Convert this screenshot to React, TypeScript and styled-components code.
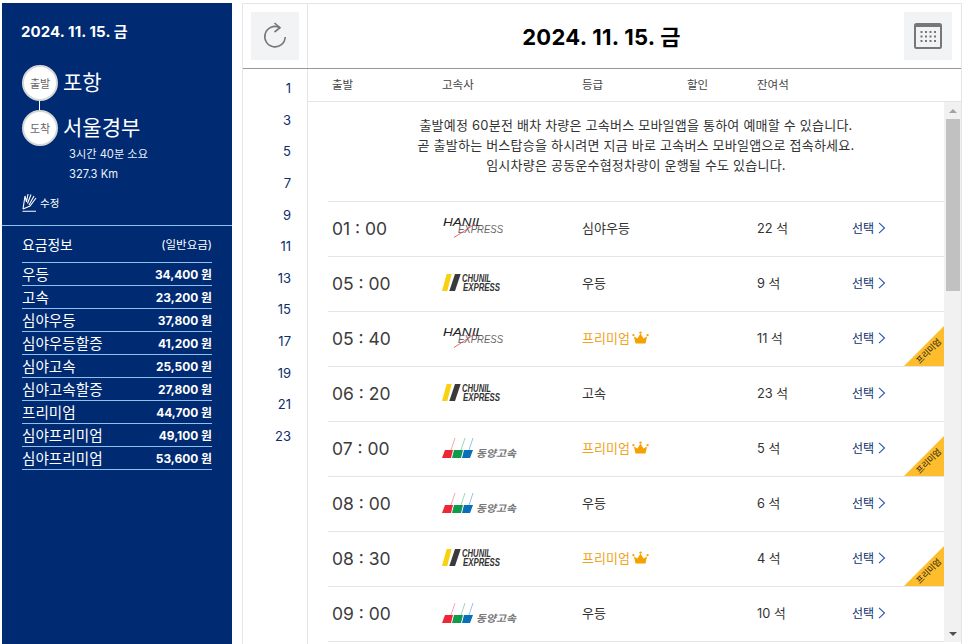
import React from "react";
import styled, { createGlobalStyle } from "styled-components";

const FONT = `Inter, "Noto Sans CJK KR", "Noto Sans", sans-serif`;

const GlobalCSS = createGlobalStyle`
    html, body {
        margin: 0;
        padding: 0;
        background: #fff;
        font-family: ${FONT};
    }
    * { box-sizing: border-box; }
`;

const PageCSS = styled.div`
    width: 965px;
    height: 644px;
    overflow: hidden;
    display: flex;
    align-items: flex-start;
    gap: 10px;
    padding: 3px 0 0 2px;
`;

const SideCSS = styled.aside`
    width: 230px;
    height: 641px;
    flex: none;
    background: #002a72;
    color: #fff;
`;

const SideDateCSS = styled.div`
    padding: 19px 0 0 19px;
    height: 62px;
    font-size: 15px;
    letter-spacing: 0.1px;
    line-height: 20px;
    font-weight: 700;
`;

const RouteCSS = styled.div`
    padding-left: 20px;
    height: 161px;
    border-bottom: 1px solid #8fc1ee;
`;

const StopCSS = styled.div`
    display: flex;
    align-items: center;
    gap: 5px;
    height: 36px;
`;

const StopBadgeCSS = styled.div`
    width: 36px;
    height: 36px;
    flex: none;
    border-radius: 50%;
    background: #fff;
    border: 2px solid #d8d8d8;
    color: #666;
    font-size: 11px;
    display: flex;
    align-items: center;
    justify-content: center;
`;

const StopNameCSS = styled.div`
    font-size: 21px;
    line-height: 36px;
`;

const StopLinkCSS = styled.div`
    width: 1px;
    height: 9px;
    background: #fff;
    margin-left: 17px;
`;

const RouteInfoCSS = styled.div`
    padding-left: 47px;
    font-size: 11.2px;
    line-height: 20px;
    margin-top: -2px;
    color: #eaf2fb;
`;

const EditCSS = styled.div`
    display: flex;
    align-items: center;
    gap: 3px;
    margin-top: 7px;
    font-size: 10.5px;
    height: 22px;
`;

const FareCSS = styled.div`
    padding: 0 20px;
`;

const FareHeadCSS = styled.div`
    display: flex;
    justify-content: space-between;
    align-items: center;
    height: 37px;
    border-bottom: 1px solid #8fc1ee;
    font-size: 13.8px;
    & > small {
        font-size: 11.5px;
    }
`;

const FareRowCSS = styled.div`
    display: flex;
    justify-content: space-between;
    align-items: center;
    height: 23px;
    padding-bottom: 2px;
    border-bottom: 1px solid #8fc1ee;
    font-size: 14.6px;
    & > b {
        font-size: 11.9px;
        font-weight: 700;
    }
`;

const MainCSS = styled.main`
    width: 720px;
    height: 641px;
    flex: none;
    border: 1px solid #e5e5e5;
    border-bottom: none;
`;

const TopCSS = styled.header`
    display: flex;
    height: 65px;
    border-bottom: 1px solid #999;
`;

const TopLeftCSS = styled.div`
    width: 65px;
    flex: none;
    border-right: 1px solid #e5e5e5;
    padding: 8px;
`;

const SquareBtnCSS = styled.div`
    width: 48px;
    height: 48px;
    background: #f2f3f5;
    display: flex;
    align-items: center;
    justify-content: center;
`;

const TopTitleCSS = styled.div`
    flex: 1;
    display: flex;
    align-items: center;
    justify-content: center;
    padding-bottom: 2px;
    font-size: 22px;
    letter-spacing: 0.3px;
    font-weight: 700;
    color: #000;
`;

const TopRightCSS = styled.div`
    padding: 8px 9px 0 9px;
`;

const BodyCSS = styled.div`
    display: flex;
    height: 575px;
`;

const HoursCSS = styled.div`
    width: 65px;
    flex: none;
    border-right: 1px solid #e5e5e5;
    padding: 4px 16px 0 0;
    text-align: right;
    font-size: 13px;
    line-height: 31.64px;
    color: #0b2f6b;
`;

const ListCSS = styled.div`
    flex: 1;
    min-width: 0;
`;

const ColsCSS = styled.div`
    display: grid;
    grid-template-columns: 110px 140px 105px 70px 1fr;
    height: 33px;
    padding: 0 0 2px 24px;
    align-items: center;
    border-bottom: 1px solid #e5e5e5;
    font-size: 11.5px;
    color: #444;
`;

const ScrollAreaCSS = styled.div`
    display: flex;
    height: 540px;
`;

const RowsCSS = styled.div`
    flex: 1;
    min-width: 0;
    padding-left: 20px;
`;

const NoticeCSS = styled.div`
    height: 100px;
    padding-top: 13px;
    text-align: center;
    font-size: 13px;
    letter-spacing: 0.22px;
    line-height: 20px;
    color: #333;
    border-bottom: 1px solid #e5e5e5;
`;

const RowCSS = styled.div`
    position: relative;
    display: grid;
    grid-template-columns: 110px 140px 175px 95px 1fr;
    align-items: center;
    height: 55px;
    padding: 0 0 3px 4px;
    border-bottom: 1px solid #e5e5e5;
    font-size: 13px;
    color: #333;
`;

const TimeCSS = styled.div`
    padding-top: 2px;
    font-size: 17.5px;
    color: #3c3c3c;
`;

const GradeCSS = styled.div<{ $premium?: boolean }>`
    display: flex;
    align-items: center;
    gap: 2px;
    color: ${(props) => (props.$premium ? "#eea321" : "#333")};
`;

const SeatsCSS = styled.span`
    font-size: 12.8px;
`;

const SelectCSS = styled.div`
    display: flex;
    align-items: center;
    gap: 4px;
    font-size: 12px;
    color: #0b2f6b;
`;

const RibbonCSS = styled.div`
    position: absolute;
    right: 0;
    bottom: 0;
    width: 40px;
    height: 40px;
    background: #fdbd2c;
    clip-path: polygon(100% 0, 100% 100%, 0 100%);
    overflow: hidden;
`;

const RibbonTextCSS = styled.span`
    position: absolute;
    left: 7px;
    top: 20px;
    width: 36px;
    text-align: center;
    font-size: 8.5px;
    line-height: 11px;
    color: #111;
    white-space: nowrap;
    transform: rotate(-45deg);
`;

const ScrollbarCSS = styled.div`
    width: 17px;
    flex: none;
    background: #f1f1f1;
    display: flex;
    flex-direction: column;
    align-items: center;
    justify-content: space-between;
    height: 540px;
`;

const ScrollThumbCSS = styled.div`
    width: 14px;
    height: 172px;
    background: #c1c1c1;
    margin-bottom: auto;
`;

const ScrollArrowCSS = styled.div<{ $down?: boolean }>`
    height: 17px;
    flex: none;
    display: flex;
    align-items: center;
    justify-content: center;
    &::before {
        content: "";
        border-left: 4px solid transparent;
        border-right: 4px solid transparent;
        ${(props) =>
            props.$down
                ? "border-top: 4px solid #505050;"
                : "border-bottom: 4px solid #a3a3a3;"}
    }
`;

// logos
const LogoTextCSS = styled.text<{ $size: number; $bold?: boolean; $color: string }>`
    font-family: "Liberation Sans", "Noto Sans CJK KR", sans-serif;
    font-style: italic;
    font-size: ${(props) => props.$size}px;
    font-weight: ${(props) => (props.$bold ? 700 : 400)};
    fill: ${(props) => props.$color};
`;

// viewBox carries 8px of spare room above and below so the text boxes stay inside
const HanilLogo = () => (
    <svg width="100" height="36" viewBox="0 -8 100 36">
        <LogoTextCSS x="1" y="8" textLength="40" lengthAdjust="spacingAndGlyphs" $size={11} $color="#222">
            HANIL
        </LogoTextCSS>
        <LogoTextCSS x="16" y="15" textLength="45" lengthAdjust="spacingAndGlyphs" $size={10} $color="#666">
            EXPRESS
        </LogoTextCSS>
        <path d="M12 19.5 L33 6" stroke="#e8434f" strokeWidth="0.8" fill="none" />
    </svg>
);

const ChunilLogo = () => (
    <svg width="100" height="33" viewBox="0 -8 100 33">
        <polygon points="4.7,0 9.7,0 5.3,17 0,17" fill="#f7d112" />
        <polygon points="13,0 18.7,0 13,17 7.3,17" fill="#3a3a3a" />
        <LogoTextCSS x="20" y="8" textLength="29" lengthAdjust="spacingAndGlyphs" $size={10.5} $bold $color="#333">
            CHUNIL
        </LogoTextCSS>
        <LogoTextCSS x="21" y="16.5" textLength="37" lengthAdjust="spacingAndGlyphs" $size={10.5} $bold $color="#333">
            EXPRESS
        </LogoTextCSS>
    </svg>
);

const DongLogo = () => (
    <svg width="100" height="36" viewBox="0 -8 100 36">
        <path d="M9 12 L13 0" stroke="#f5a9b5" strokeWidth="1" />
        <path d="M19 12 L23 0" stroke="#a0d9b8" strokeWidth="1" />
        <path d="M27 12 L31 0" stroke="#93c3ec" strokeWidth="1" />
        <polygon points="3,12 11,12 9,20 0,20" fill="#ee2737" />
        <polygon points="12,12 21,12 19,20 10,20" fill="#0f9b4b" />
        <polygon points="22,12 31,12 28,20 20,20" fill="#0a6fbb" />
        <LogoTextCSS x="34" y="19" textLength="40" lengthAdjust="spacingAndGlyphs" $size={10} $bold $color="#777">
            동양고속
        </LogoTextCSS>
    </svg>
);

const CrownIcon = () => (
    <svg width="17" height="14" viewBox="0 0 17 14">
        <path
            d="M3.5 12.5 L2 5.5 L5.5 7.5 L8.5 2.5 L11.5 7.5 L15 5.5 L13.5 12.5 Z"
            fill="#f5a100"
        />
        <circle cx="8.5" cy="1.6" r="1.2" fill="#f5a100" />
        <circle cx="1.4" cy="4.2" r="1.1" fill="#f5a100" />
        <circle cx="15.6" cy="4.2" r="1.1" fill="#f5a100" />
    </svg>
);

const ChevronIcon = () => (
    <svg width="8" height="12" viewBox="0 0 8 12">
        <path d="M1 0.8 L6.5 6 L1 11.2" stroke="#2a56b0" strokeWidth="1.1" fill="none" />
    </svg>
);

const logos: Record<string, React.ReactNode> = {
    hanil: <HanilLogo />,
    chunil: <ChunilLogo />,
    dong: <DongLogo />,
};

const fares = [
    ["우등", "34,400 원"],
    ["고속", "23,200 원"],
    ["심야우등", "37,800 원"],
    ["심야우등할증", "41,200 원"],
    ["심야고속", "25,500 원"],
    ["심야고속할증", "27,800 원"],
    ["프리미엄", "44,700 원"],
    ["심야프리미엄", "49,100 원"],
    ["심야프리미엄", "53,600 원"],
];

const hours = [1, 3, 5, 7, 9, 11, 13, 15, 17, 19, 21, 23];

const buses = [
    { time: "01 : 00", logo: "hanil", grade: "심야우등", seats: "22 석" },
    { time: "05 : 00", logo: "chunil", grade: "우등", seats: "9 석" },
    { time: "05 : 40", logo: "hanil", grade: "프리미엄", seats: "11 석", premium: true },
    { time: "06 : 20", logo: "chunil", grade: "고속", seats: "23 석" },
    { time: "07 : 00", logo: "dong", grade: "프리미엄", seats: "5 석", premium: true },
    { time: "08 : 00", logo: "dong", grade: "우등", seats: "6 석" },
    { time: "08 : 30", logo: "chunil", grade: "프리미엄", seats: "4 석", premium: true },
    { time: "09 : 00", logo: "dong", grade: "우등", seats: "10 석" },
];

function App() {
    return (
        <PageCSS>
            <GlobalCSS />
            <SideCSS>
                <SideDateCSS>2024. 11. 15. 금</SideDateCSS>
                <RouteCSS>
                    <StopCSS>
                        <StopBadgeCSS>출발</StopBadgeCSS>
                        <StopNameCSS>포항</StopNameCSS>
                    </StopCSS>
                    <StopLinkCSS />
                    <StopCSS>
                        <StopBadgeCSS>도착</StopBadgeCSS>
                        <StopNameCSS>서울경부</StopNameCSS>
                    </StopCSS>
                    <RouteInfoCSS>
                        <div>3시간 40분 소요</div>
                        <div>327.3 Km</div>
                    </RouteInfoCSS>
                    <EditCSS>
                        <svg width="15" height="19" viewBox="0 0 15 19">
                            <path
                                d="M1 16 L3 3 L4.5 9 M6 1 L4.5 9 M9 1.5 L5.5 10.5 M12 3 L7 12 M14 5 L8 13 L1 16 M0.5 18.3 H14"
                                stroke="#fff"
                                strokeWidth="1.1"
                                fill="none"
                            />
                        </svg>
                        수정
                    </EditCSS>
                </RouteCSS>
                <FareCSS>
                    <FareHeadCSS>
                        <span>요금정보</span>
                        <small>(일반요금)</small>
                    </FareHeadCSS>
                    {fares.map(([name, price], i) => (
                        <FareRowCSS key={i}>
                            <span>{name}</span>
                            <b>{price}</b>
                        </FareRowCSS>
                    ))}
                </FareCSS>
            </SideCSS>
            <MainCSS>
                <TopCSS>
                    <TopLeftCSS>
                        <SquareBtnCSS>
                            <svg width="26" height="28" viewBox="0 0 26 28">
                                <path
                                    d="M17.5 5.5 A10.2 10.2 0 1 0 23.2 15"
                                    stroke="#777"
                                    strokeWidth="1.6"
                                    fill="none"
                                />
                                <path d="M12.5 1 L18 5.7 L12.5 10" stroke="#777" strokeWidth="1.6" fill="none" />
                            </svg>
                        </SquareBtnCSS>
                    </TopLeftCSS>
                    <TopTitleCSS>2024. 11. 15. 금</TopTitleCSS>
                    <TopRightCSS>
                        <SquareBtnCSS>
                            <svg width="28" height="26" viewBox="0 0 28 26">
                                <rect x="1" y="1" width="26" height="24" rx="1.5" fill="none" stroke="#777" strokeWidth="2" />
                                <rect x="1" y="1" width="26" height="3" fill="#777" />
                                {[8, 12.5, 17].map((y) =>
                                    [6.5, 11, 15.5, 20].map((x) => (
                                        <rect key={`${x}-${y}`} x={x} y={y} width="2" height="2" fill="#777" />
                                    ))
                                )}
                            </svg>
                        </SquareBtnCSS>
                    </TopRightCSS>
                </TopCSS>
                <BodyCSS>
                    <HoursCSS>
                        {hours.map((h) => (
                            <div key={h}>{h}</div>
                        ))}
                    </HoursCSS>
                    <ListCSS>
                        <ColsCSS>
                            <span>출발</span>
                            <span>고속사</span>
                            <span>등급</span>
                            <span>할인</span>
                            <span>잔여석</span>
                        </ColsCSS>
                        <ScrollAreaCSS>
                            <RowsCSS>
                                <NoticeCSS>
                                    <div>출발예정 60분전 배차 차량은 고속버스 모바일앱을 통하여 예매할 수 있습니다.</div>
                                    <div>곧 출발하는 버스탑승을 하시려면 지금 바로 고속버스 모바일앱으로 접속하세요.</div>
                                    <div>임시차량은 공동운수협정차량이 운행될 수도 있습니다.</div>
                                </NoticeCSS>
                                {buses.map((bus) => (
                                    <RowCSS key={bus.time}>
                                        <TimeCSS>{bus.time}</TimeCSS>
                                        {logos[bus.logo]}
                                        <GradeCSS $premium={bus.premium}>
                                            {bus.grade}
                                            {bus.premium && <CrownIcon />}
                                        </GradeCSS>
                                        <SeatsCSS>{bus.seats}</SeatsCSS>
                                        <SelectCSS>
                                            선택
                                            <ChevronIcon />
                                        </SelectCSS>
                                        {bus.premium && (
                                            <RibbonCSS>
                                                <RibbonTextCSS>프리미엄</RibbonTextCSS>
                                            </RibbonCSS>
                                        )}
                                    </RowCSS>
                                ))}
                            </RowsCSS>
                            <ScrollbarCSS>
                                <ScrollArrowCSS />
                                <ScrollThumbCSS />
                                <ScrollArrowCSS $down />
                            </ScrollbarCSS>
                        </ScrollAreaCSS>
                    </ListCSS>
                </BodyCSS>
            </MainCSS>
        </PageCSS>
    );
}

export default App;
